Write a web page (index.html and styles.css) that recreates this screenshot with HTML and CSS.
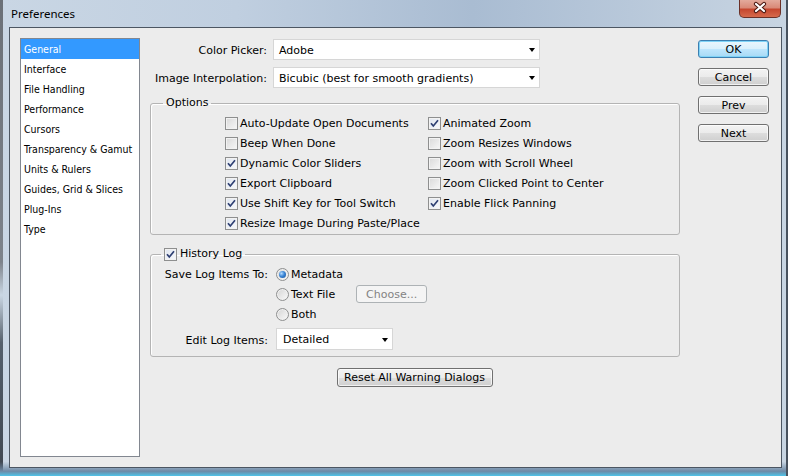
FILE: index.html
```html
<!DOCTYPE html>
<html lang="en">
<head>
    <meta charset="UTF-8">
    <title>Preferences</title>
    <link rel="stylesheet" href="styles.css">
</head>
<body>
    <div class="window">
        <div class="titlebar">
            <span class="title">Preferences</span>
            <div class="close-btn">
                <svg width="42" height="18" viewBox="0 0 42 18">
                    <path d="M17 5 L25 12 M25 5 L17 12" stroke="#4a1710" stroke-width="4.2" stroke-linecap="round"/>
                    <path d="M17 5 L25 12 M25 5 L17 12" stroke="#fff" stroke-width="2.2" stroke-linecap="round"/>
                </svg>
            </div>
        </div>
        <div class="client">
            <ul class="nav-list">
                <li class="selected">General</li>
                <li>Interface</li>
                <li>File Handling</li>
                <li>Performance</li>
                <li>Cursors</li>
                <li>Transparency &amp; Gamut</li>
                <li>Units &amp; Rulers</li>
                <li>Guides, Grid &amp; Slices</li>
                <li>Plug-Ins</li>
                <li>Type</li>
            </ul>

            <div class="main">
                <div class="field-row">
                    <span class="field-label">Color Picker:</span>
                    <div class="select wide"><span>Adobe</span><i class="arrow"></i></div>
                </div>
                <div class="field-row second">
                    <span class="field-label">Image Interpolation:</span>
                    <div class="select wide"><span>Bicubic (best for smooth gradients)</span><i class="arrow"></i></div>
                </div>

                <fieldset class="group options">
                    <legend>Options</legend>
                    <div class="check-cols">
                        <div class="check-col first">
                            <label class="check"><span class="box"></span>Auto-Update Open Documents</label>
                            <label class="check"><span class="box"></span>Beep When Done</label>
                            <label class="check"><span class="box checked"><svg width="11" height="11" viewBox="0 0 11 11"><path d="M2 5.2 L4.3 8 L9 2.3" fill="none" stroke="#2e3f72" stroke-width="1.7"/></svg></span>Dynamic Color Sliders</label>
                            <label class="check"><span class="box checked"><svg width="11" height="11" viewBox="0 0 11 11"><path d="M2 5.2 L4.3 8 L9 2.3" fill="none" stroke="#2e3f72" stroke-width="1.7"/></svg></span>Export Clipboard</label>
                            <label class="check"><span class="box checked"><svg width="11" height="11" viewBox="0 0 11 11"><path d="M2 5.2 L4.3 8 L9 2.3" fill="none" stroke="#2e3f72" stroke-width="1.7"/></svg></span>Use Shift Key for Tool Switch</label>
                            <label class="check"><span class="box checked"><svg width="11" height="11" viewBox="0 0 11 11"><path d="M2 5.2 L4.3 8 L9 2.3" fill="none" stroke="#2e3f72" stroke-width="1.7"/></svg></span>Resize Image During Paste/Place</label>
                        </div>
                        <div class="check-col">
                            <label class="check"><span class="box checked"><svg width="11" height="11" viewBox="0 0 11 11"><path d="M2 5.2 L4.3 8 L9 2.3" fill="none" stroke="#2e3f72" stroke-width="1.7"/></svg></span>Animated Zoom</label>
                            <label class="check"><span class="box"></span>Zoom Resizes Windows</label>
                            <label class="check"><span class="box"></span>Zoom with Scroll Wheel</label>
                            <label class="check"><span class="box"></span>Zoom Clicked Point to Center</label>
                            <label class="check"><span class="box checked"><svg width="11" height="11" viewBox="0 0 11 11"><path d="M2 5.2 L4.3 8 L9 2.3" fill="none" stroke="#2e3f72" stroke-width="1.7"/></svg></span>Enable Flick Panning</label>
                        </div>
                    </div>
                </fieldset>

                <fieldset class="group history">
                    <legend><label class="check"><span class="box checked"><svg width="11" height="11" viewBox="0 0 11 11"><path d="M2 5.2 L4.3 8 L9 2.3" fill="none" stroke="#2e3f72" stroke-width="1.7"/></svg></span>History Log</label></legend>
                    <div class="log-grid">
                        <span class="log-label">Save Log Items To:</span>
                        <label class="radio"><span class="dot on"></span>Metadata</label>
                        <span></span>
                        <div class="radio-row">
                            <label class="radio"><span class="dot"></span>Text File</label>
                            <button class="btn small" disabled>Choose...</button>
                        </div>
                        <span></span>
                        <label class="radio"><span class="dot"></span>Both</label>
                        <span class="log-label edit">Edit Log Items:</span>
                        <div class="select narrow edit"><span>Detailed</span><i class="arrow"></i></div>
                    </div>
                </fieldset>

                <div class="reset-row">
                    <button class="btn reset">Reset All Warning Dialogs</button>
                </div>
            </div>

            <div class="side-buttons">
                <button class="btn default">OK</button>
                <button class="btn">Cancel</button>
                <button class="btn">Prev</button>
                <button class="btn">Next</button>
            </div>
        </div>
    </div>
</body>
</html>
```

FILE: styles.css
```css
* {
    box-sizing: border-box;
}
html, body {
    margin: 0;
    padding: 0;
}
body {
    width: 788px;
    height: 476px;
    overflow: hidden;
    background: #1d3550;
    font-family: "DejaVu Sans", sans-serif;
    font-size: 11px;
    color: #000;
}
.window {
    width: 788px;
    height: 476px;
    display: flex;
    flex-direction: column;
    background:
        linear-gradient(to bottom, transparent 0%, transparent 97%, #6e8aa6 99%, #4fc3e8 100%),
        linear-gradient(to bottom, #6b7077 0%, #7d838b 55%, #c9d6e3 62%, #55606c 72%, #3e4650 100%) left top / 3px 100% no-repeat,
        linear-gradient(to right, #c9d6e4 0%, #c0cfe0 30%, #a9bcd2 60%, #b8c8da 80%, #c8d5e2 100%);
    box-shadow: inset -2px 0 0 #48525e;
}
.titlebar {
    height: 27px;
    display: flex;
    align-items: flex-start;
    padding-left: 11px;
}
.title {
    line-height: 28px;
    font-family: "Noto Sans", sans-serif;
    font-size: 11.5px;
}
.close-btn {
    margin-left: auto;
    margin-right: 7px;
    width: 42px;
    height: 18px;
    border: 1px solid #6b3128;
    border-top: none;
    border-radius: 0 0 5px 5px;
    background: linear-gradient(#e3aa9c 0%, #d98a78 45%, #c5472f 55%, #d66a4c 100%);
}
.close-btn svg {
    display: block;
    margin: -1px 0 0 -1px;
}

/* client area */
.client {
    flex: 1;
    margin: 0 6px 8px 9px;
    border: 1px solid #4c5662;
    background: #ececec;
    display: flex;
    align-items: flex-start;
    padding: 10px 12px 10px 10px;
}
.nav-list {
    width: 120px;
    height: 100%;
    margin: 0;
    padding: 0;
    list-style: none;
    background: #fff;
    border: 1px solid #828790;
    font-family: "DejaVu Sans", sans-serif;
    font-stretch: condensed;
    font-size: 10.5px;
}
.nav-list li {
    height: 20px;
    line-height: 21px;
    padding-left: 3px;
    white-space: nowrap;
}
.nav-list li.selected {
    background: #3399ff;
    color: #fff;
}

.main {
    width: 531px;
    margin-left: 9px;
}
.field-row {
    display: flex;
    align-items: center;
    margin-top: 1px;
}
.field-row.second {
    margin-top: 7px;
}
.field-label {
    width: 118px;
    margin-right: 6px;
    padding-top: 1px;
    text-align: right;
    white-space: nowrap;
}
.select {
    display: flex;
    align-items: center;
    justify-content: space-between;
    height: 21px;
    background: #fff;
    border: 1px solid #d6d6d6;
    padding: 1px 4px 0 5px;
}
.select.wide {
    width: 267px;
}
.select.narrow {
    width: 117px;
    height: 22px;
    padding-left: 6px;
}
.arrow {
    width: 0;
    height: 0;
    border-left: 3.5px solid transparent;
    border-right: 3.5px solid transparent;
    border-top: 4px solid #000;
}

/* group boxes */
.group {
    margin: 0 0 0 1px;
    width: 530px;
    padding: 0;
    border: 1px solid #b4b4b4;
    border-radius: 3px;
    box-shadow: inset 1px 1px 0 #fff;
}
.group legend {
    padding: 0 3px;
    line-height: 14px;
}
.options {
    margin-top: 8px;
}
.options legend {
    margin-left: 12px;
}
.check-cols {
    display: flex;
    padding: 3px 0 1px 74px;
}
.check-col.first {
    width: 203px;
}
.check {
    display: flex;
    align-items: center;
    height: 20px;
    white-space: nowrap;
}
.box {
    width: 13px;
    height: 13px;
    margin-right: 2px;
    border: 1px solid #8e8f8f;
    background: linear-gradient(135deg, #d9d9d9, #f7f7f7);
    box-shadow: inset 0 0 0 1px #f2f2f2;
    display: flex;
    align-items: center;
    justify-content: center;
}
.box.checked {
    background: linear-gradient(135deg, #dfe5ef, #f8f9fb);
}

.history {
    margin-top: 12px;
}
.history legend {
    margin-left: 10px;
}
.history legend .check {
    height: 14px;
}
.history legend .box {
    margin-right: 3px;
}
.log-grid {
    display: grid;
    grid-template-columns: 117px auto;
    grid-template-rows: 20px 20px 20px 27px;
    column-gap: 8px;
    align-items: center;
    padding: 3px 0 5px 0;
}
.log-label {
    text-align: right;
    white-space: nowrap;
}
.log-label.edit {
    margin-top: 5px;
}
.log-grid .select.edit {
    align-self: start;
    margin-top: 4px;
}
.radio-row {
    display: flex;
    align-items: center;
}
.radio {
    display: flex;
    align-items: center;
    height: 20px;
    white-space: nowrap;
}
.dot {
    width: 13px;
    height: 13px;
    margin-right: 2px;
    border-radius: 50%;
    border: 1px solid #8e8f8f;
    background: linear-gradient(135deg, #d4d4d4, #fafafa);
    box-shadow: inset 0 0 0 1px #f0f0f0;
    display: flex;
    align-items: center;
    justify-content: center;
}
.dot.on::after {
    content: "";
    width: 7px;
    height: 7px;
    border-radius: 50%;
    background: radial-gradient(circle at 35% 35%, #b5dcff 0%, #3b86d6 45%, #144f99 100%);
}

/* buttons */
.btn {
    font-family: "DejaVu Sans", sans-serif;
    font-size: 11px;
    color: #000;
    height: 18px;
    padding: 0;
    border: 1px solid #707070;
    border-radius: 3px;
    background: linear-gradient(#f3f3f3 0%, #ebebeb 50%, #dddddd 51%, #cfcfcf 100%);
    box-shadow: inset 0 0 0 1px rgba(255, 255, 255, 0.7);
}
.btn.small {
    width: 71px;
    margin-left: 21px;
    color: #838383;
    border-color: #adb2b5;
    background: #f4f4f4;
    box-shadow: none;
}
.btn.default {
    border-color: #3c7fb1;
    background: linear-gradient(#eaf6fd 0%, #d9f0fc 50%, #bee6fd 51%, #a7d9f5 100%);
    box-shadow: inset 0 0 0 1px #7fd3f7;
}
.reset-row {
    display: flex;
    justify-content: center;
    margin-top: 11px;
}
.btn.reset {
    width: 156px;
    height: 19px;
}
.side-buttons {
    display: flex;
    flex-direction: column;
    gap: 10px;
    margin-left: 18px;
    padding-top: 2px;
}
.side-buttons .btn {
    width: 71px;
}
```
